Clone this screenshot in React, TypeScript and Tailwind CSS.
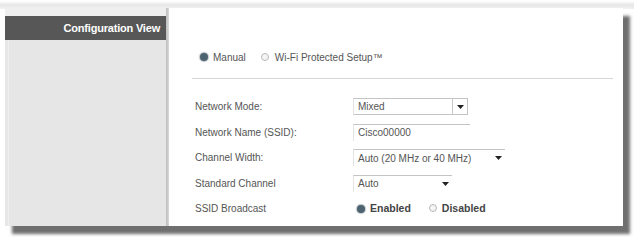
import React from "react";

const font = { fontFamily: '"Liberation Sans", Arial, sans-serif' };

function Radio({ on }: { on?: boolean }) {
  return on ? (
    <span className="inline-block w-[8px] h-[8px] rounded-full bg-[#4d6470] shadow-[0_0_1px_1px_rgba(80,100,110,0.4)]" />
  ) : (
    <span className="inline-block w-[8px] h-[8px] rounded-full border border-[#b8b8b8] bg-[#f4f4f4]" />
  );
}

function Arrow() {
  return (
    <svg width="7" height="4" viewBox="0 0 7 4">
      <path d="M0 0 L7 0 L3.5 4 Z" fill="#222" />
    </svg>
  );
}

function Select({ value, w, boxed }: { value: string; w: string; boxed?: boolean }) {
  return (
    <div className={`flex items-center h-[17px] ${w} border-t border-[#c4c4c4] border-l border-l-[#e4e4e4] ${boxed ? "border border-[#a9a9a9]" : ""}`}>
      <span className={`flex-1 pl-[4px] text-[#555] ${boxed ? "border-r border-[#c8c8c8] h-full flex items-center" : ""}`}>{value}</span>
      <span className="w-[14px] flex justify-center"><Arrow /></span>
    </div>
  );
}

export default function App() {
  const rows = ["Network Mode:", "Network Name (SSID):", "Channel Width:", "Standard Channel", "SSID Broadcast"];
  return (
    <div className="w-[634px] h-[237px] bg-white relative overflow-hidden text-[10px]" style={font}>
      <div className="absolute left-0 right-0 top-[1px] h-[8px] bg-gradient-to-b from-white via-[#e6e6e6] to-[#f2f2f2]" />
      <div className="relative ml-[5px] mt-[8px] w-[618px] h-[218px] flex shadow-[7px_8px_3px_rgba(50,50,50,0.7)]">
        <div className="w-[161px] bg-[#e7e7e7] flex flex-col">
          <div className="h-[8px] bg-[#efefef]" />
          <div className="h-[24px] bg-[#575757] text-white font-bold text-[11px] tracking-[-0.2px] flex items-center justify-end pr-[6px]">
            Configuration View
          </div>
          <div className="flex-1 ml-[3px] bg-[#e6e6e6] border-l border-[#f0f0f0]" />
        </div>
        <div className="w-[3px] bg-gradient-to-r from-[#bdbdbd] to-[#d8d8d8]" />
        <div className="flex-1 bg-white flex flex-col text-[#555] pl-[23px] pr-[10px]">
          <div className="h-[43px]" />
          <div className="flex items-center h-[12px] pl-[8px] text-[10px]">
            <Radio on />
            <span className="ml-[5px]">Manual</span>
            <span className="ml-[15px]"><Radio /></span>
            <span className="ml-[6px]">Wi-Fi Protected Setup™</span>
          </div>
          <div className="h-[15px]" />
          <div className="h-[2px] border-t border-[#d6d6d6]" />
          <div className="h-[14px]" />
          <div className="grid grid-cols-[158px_1fr] auto-rows-[25.5px] items-center pl-[3px]">
            <span>{rows[0]}</span>
            <Select value="Mixed" w="w-[115px]" boxed />
            <span>{rows[1]}</span>
            <div className="h-[17px] w-[117px] border-t border-[#c4c4c4] border-l border-l-[#e4e4e4] pl-[4px] flex items-center">Cisco00000</div>
            <span>{rows[2]}</span>
            <Select value="Auto (20 MHz or 40 MHz)" w="w-[152px]" />
            <span>{rows[3]}</span>
            <Select value="Auto" w="w-[99px]" />
            <span>{rows[4]}</span>
            <div className="flex items-center pl-[4px]">
              <Radio on />
              <span className="ml-[5px] font-bold text-[#444] text-[10.5px]">Enabled</span>
              <span className="ml-[18px]"><Radio /></span>
              <span className="ml-[5px] font-bold text-[#444] text-[10.5px]">Disabled</span>
            </div>
          </div>
        </div>
      </div>
    </div>
  );
}
